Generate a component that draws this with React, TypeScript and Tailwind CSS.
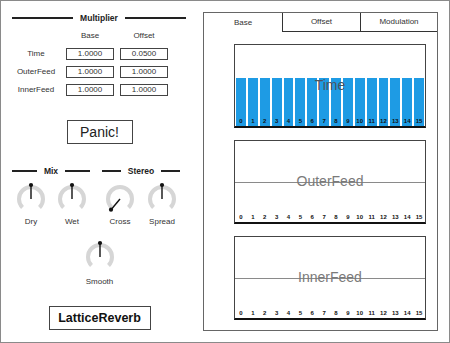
import React from "react";

const FONT = { fontFamily: '"Liberation Sans", Arial, sans-serif' };

function Knob({ angle }: { angle: number }) {
  const cx = 16, cy = 16, r = 12;
  const pt = (a: number, rr: number) => [cx + rr * Math.sin((a * Math.PI) / 180), cy - rr * Math.cos((a * Math.PI) / 180)];
  const [sx, sy] = pt(-135, r);
  const [ex, ey] = pt(135, r);
  const [px, py] = pt(angle, 14);
  return (
    <svg width={32} height={32} viewBox="0 0 32 32" className="overflow-visible">
      <path d={`M ${sx} ${sy} A ${r} ${r} 0 1 1 ${ex} ${ey}`} fill="none" stroke="#d6d6d6" strokeWidth={4} />
      <line x1={cx} y1={cy} x2={px} y2={py} stroke="#111" strokeWidth={1.4} />
      <circle cx={px} cy={py} r={2.1} fill="#111" />
    </svg>
  );
}

function KnobCol({ label, angle }: { label: string; angle: number }) {
  return (
    <div className="flex flex-col items-center w-[32px]">
      <Knob angle={angle} />
      <div className="mt-[2px] h-[10px] leading-[10px] text-[8px] text-[#333] whitespace-nowrap">{label}</div>
    </div>
  );
}

function Heading({ text, w }: { text: string; w: string }) {
  return (
    <div className={`flex items-center h-[12px] ${w}`}>
      <div className="flex-1 h-[2px] bg-[#222]" />
      <div className="px-[7px] text-[8.5px] font-bold text-[#222] leading-[12px]">{text}</div>
      <div className="flex-1 h-[2px] bg-[#222]" />
    </div>
  );
}

function Field({ v }: { v: string }) {
  return (
    <div className="w-[48px] h-[12px] border border-[#444] flex items-center justify-center text-[8px] text-[#333] leading-none">
      {v}
    </div>
  );
}

function Chart({ title, filled }: { title: string; filled: boolean }) {
  const nums = Array.from({ length: 16 }, (_, i) => i);
  return (
    <div className="relative h-[84px] border border-[#444] border-b-2 border-b-[#111] bg-white overflow-hidden">
      {!filled && <div className="absolute left-0 right-0 top-[41px] h-[1px] bg-[#8a8a8a]" />}
      <div className="absolute inset-0 flex gap-[2px] px-[1px]">
        {nums.map((n) => (
          <div key={n} className="flex-1 flex flex-col justify-end">
            <div className={`${filled ? "h-[48px] bg-[#1e9be4]" : "h-[12px]"} flex items-end justify-center pb-[2px]`}>
              <span className="text-[6px] font-bold text-[#111] leading-none">{n}</span>
            </div>
          </div>
        ))}
      </div>
      <div className="absolute inset-0 flex items-center justify-center pb-[1px]">
        <span className={`text-[14px] leading-none ${filled ? "text-[#4a5560]" : "text-[#7a7a7a]"}`}>{title}</span>
      </div>
    </div>
  );
}

export default function App() {
  return (
    <div style={FONT} className="w-[450px] h-[343px] border border-[#8a8a8a] bg-white flex overflow-hidden">
      {/* Left column */}
      <div className="w-[197px] flex flex-col items-center pt-[11px]">
        <div className="self-start ml-[11px]">
          <Heading text="Multiplier" w="w-[174px]" />
        </div>
        <div className="self-start ml-[11px] mt-[7px] h-[10px] flex w-[156px] text-[8px] text-[#333] leading-[10px]">
          <div className="w-[48px]" />
          <div className="w-[48px] ml-[6px] text-center">Base</div>
          <div className="w-[48px] ml-[6px] text-center">Offset</div>
        </div>
        <div className="self-start ml-[11px] mt-[7px] flex flex-col gap-[6px] w-[156px]">
          {[
            ["Time", "1.0000", "0.0500"],
            ["OuterFeed", "1.0000", "1.0000"],
            ["InnerFeed", "1.0000", "1.0000"],
          ].map(([l, a, b]) => (
            <div key={l} className="flex items-center h-[12px]">
              <div className="w-[48px] text-center text-[8px] text-[#333] whitespace-nowrap">{l}</div>
              <div className="ml-[6px]"><Field v={a} /></div>
              <div className="ml-[6px]"><Field v={b} /></div>
            </div>
          ))}
        </div>
        <div className="mt-[24px] w-[66px] h-[24px] border border-[#444] flex items-center justify-center text-[14px] text-[#222]">
          Panic!
        </div>
        <div className="self-start ml-[11px] mt-[21px] flex gap-[12px]">
          <Heading text="Mix" w="w-[78px]" />
          <Heading text="Stereo" w="w-[78px]" />
        </div>
        <div className="self-start ml-[14px] mt-[6px] flex">
          <KnobCol label="Dry" angle={0} />
          <div className="ml-[9px]"><KnobCol label="Wet" angle={0} /></div>
          <div className="ml-[16px]"><KnobCol label="Cross" angle={-140} /></div>
          <div className="ml-[10px]"><KnobCol label="Spread" angle={0} /></div>
        </div>
        <div className="mt-[14px] flex flex-col items-center">
          <Knob angle={0} />
          <div className="mt-[4px] h-[10px] leading-[10px] text-[8px] text-[#333]">Smooth</div>
        </div>
        <div className="mt-[19px] w-[102px] h-[24px] border border-[#444] flex items-center justify-center text-[12.5px] font-bold text-[#111]">
          LatticeReverb
        </div>
      </div>

      {/* Right panel */}
      <div className="ml-[5px] mt-[11px] w-[235px] h-[319px] border border-[#666] flex flex-col">
        <div className="flex h-[19px] text-[8px] text-[#333]">
          <div className="w-[78px] flex items-center justify-center">Base</div>
          <div className="w-[78px] border-l border-b border-[#333] flex items-center justify-center">Offset</div>
          <div className="flex-1 border-l border-b border-[#333] flex items-center justify-center">Modulation</div>
        </div>
        <div className="mt-[12px] ml-[30px] mr-[11px] flex flex-col gap-[12px]">
          <Chart title="Time" filled />
          <Chart title="OuterFeed" filled={false} />
          <Chart title="InnerFeed" filled={false} />
        </div>
      </div>
    </div>
  );
}
